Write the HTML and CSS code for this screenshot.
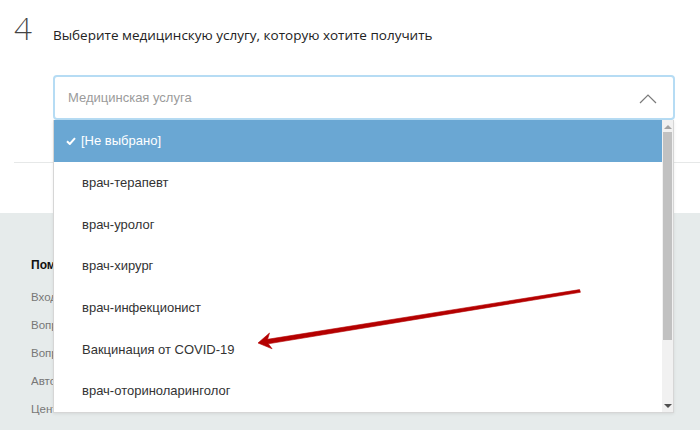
FILE: index.html
```html
<!DOCTYPE html>
<html lang="ru">
<head>
<meta charset="utf-8">
<title>Медицинская услуга</title>
<link rel="stylesheet" href="styles.css">
</head>
<body>
<div class="page">
  <div class="step">
    <span class="step-num">4</span>
    <span class="step-title">Выберите медицинскую услугу, которую хотите получить</span>
  </div>

  <div class="select">
    <span class="placeholder">Медицинская услуга</span>
    <svg class="chevron" width="18" height="10" viewBox="0 0 18 10"><polyline points="1,9 9,1 17,9" fill="none" stroke="#7a7a7a" stroke-width="1.2"/></svg>

    <div class="dropdown">
      <ul class="options">
        <li class="option selected"><svg class="check" width="10" height="8" viewBox="0 0 10 8"><polyline points="1,4.2 3.8,7 9,1.2" fill="none" stroke="#fff" stroke-width="2"/></svg>[Не выбрано]</li>
        <li class="option">врач-терапевт</li>
        <li class="option">врач-уролог</li>
        <li class="option">врач-хирург</li>
        <li class="option">врач-инфекционист</li>
        <li class="option">Вакцинация от COVID-19</li>
        <li class="option">врач-оториноларинголог</li>
      </ul>
      <div class="scrollbar">
        <span class="sb-up"></span>
        <span class="sb-thumb"></span>
        <span class="sb-down"></span>
      </div>
    </div>
  </div>

  <div class="rule"></div>

  <footer class="footer">
    <div class="footer-col">
      <div class="footer-head">Помощь</div>
      <div class="footer-link">Вход в личный кабинет</div>
      <div class="footer-link">Вопросы и ответы</div>
      <div class="footer-link">Вопросы по записи</div>
      <div class="footer-link">Авторизация</div>
      <div class="footer-link">Центр поддержки</div>
    </div>
  </footer>

  <svg class="annotation" width="700" height="430" viewBox="0 0 700 430">
    <polygon points="258,343 269.5,333 267.6,339.3 579.6,289.6 580.4,292.3 268.3,343.8 272.1,348.8" fill="#b40000" stroke="#b40000" stroke-width="0.6" stroke-linejoin="round"/>
  </svg>
</div>
</body>
</html>
```

FILE: styles.css
```css
* { box-sizing: border-box; }
html, body { margin: 0; padding: 0; background: #fff; }
body { width: 700px; height: 430px; overflow: hidden; font-family: "Liberation Sans", Arial, sans-serif; }

.page { position: relative; width: 700px; height: 430px; overflow: hidden; }

.step {
  display: flex;
  align-items: baseline;
  height: 75px;
  padding: 12px 0 0 14px;
}
.step-num {
  width: 39px;
  font-family: Lato, "Open Sans", sans-serif;
  font-weight: 300;
  font-size: 32px;
  line-height: 32px;
  color: #444;
}
.step-title {
  font-family: "Open Sans", "Liberation Sans", sans-serif;
  font-size: 13.5px;
  color: #222;
}

.select {
  position: relative;
  margin-left: 53px;
  width: 622px;
  height: 45px;
  border: 2px solid #b6dcf4;
  border-radius: 4px;
  padding: 0 13px;
  display: flex;
  align-items: center;
  justify-content: space-between;
  z-index: 2;
  background: #fff;
}
.placeholder { font-size: 13px; color: #9b9b9b; }
.chevron { margin-right: 3px; margin-top: 2px; }

.dropdown {
  position: absolute;
  left: -2px;
  top: 43px;
  width: 621px;
  height: 293px;
  display: flex;
  background: #fff;
  border: 1px solid #d6d6d6;
  border-top: none;
  box-shadow: 0 1px 3px rgba(0,0,0,0.08);
}
.options { flex: 1; list-style: none; margin: 0; padding: 0; }
.option {
  height: 41.7px;
  display: flex;
  align-items: center;
  padding-left: 28px;
  font-size: 13px;
  color: #333;
}
.option.selected {
  background: #6aa7d3;
  color: #fff;
  padding-left: 12px;
}
.check { margin-right: 5px; }

.scrollbar {
  width: 11px;
  background: #f1f1f1;
  display: flex;
  flex-direction: column;
  align-items: center;
  padding: 5px 0 4px;
}
.sb-up, .sb-down { width: 0; height: 0; border-left: 4px solid transparent; border-right: 4px solid transparent; }
.sb-up { border-bottom: 4px solid #a3a3a3; }
.sb-down { border-top: 4px solid #505050; margin-top: auto; }
.sb-thumb { width: 9px; height: 208px; margin-top: 3px; background: #c1c1c1; }

.rule {
  margin: 42px 0 0 14px;
  border-top: 1px solid #e6e8e8;
  height: 51px;
}

.footer {
  background: #e6ebeb;
  height: 217px;
  padding: 45px 0 0 31px;
}
.footer-col {
  width: 22px;
  overflow: hidden;
  white-space: nowrap;
}
.footer-head {
  font-size: 12px;
  font-weight: bold;
  color: #111;
  height: 18px;
  margin-bottom: 15px;
}
.footer-link {
  font-size: 11.5px;
  color: #777;
  height: 28px;
}

.annotation { position: absolute; left: 0; top: 0; pointer-events: none; z-index: 5; }
```
